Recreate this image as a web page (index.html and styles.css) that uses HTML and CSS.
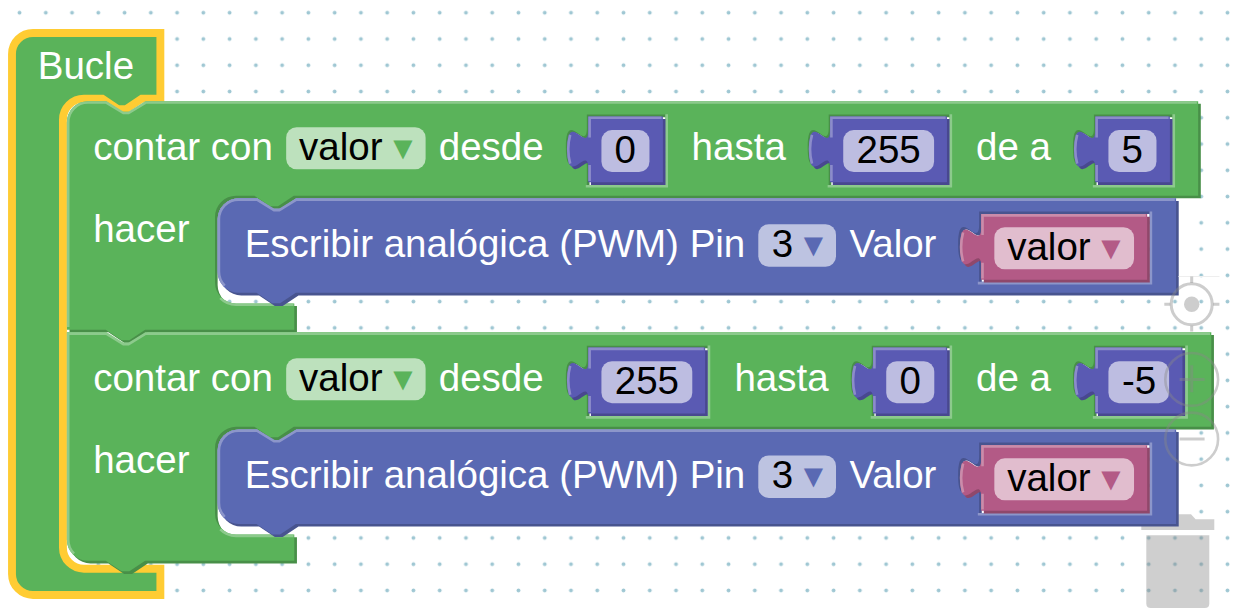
FILE: index.html
```html
<!DOCTYPE html>
<html lang="es">
<head>
<meta charset="utf-8">
<title>Bloques</title>
<link rel="stylesheet" href="styles.css">
</head>
<body>
<svg class="workspace" width="1237" height="614" viewBox="0 0 1237 614">
  <defs>
    <pattern id="grid" x="6.4" y="-0.4" width="26.26" height="26.26" patternUnits="userSpaceOnUse">
      <circle class="dot" cx="13.13" cy="13.13" r="1.9"/>
    </pattern>
  </defs>
  <rect width="1237" height="614" fill="url(#grid)"/>

  <g class="trash">
    <path d="M1141.3 530V519.3H1160L1164.6 514.3H1191L1195.6 519.3H1214.3V530Z"/>
    <path d="M1146.3 535.3H1209.3V603.5Q1209.3 608 1204.8 608H1150.8Q1146.3 608 1146.3 603.5Z"/>
  </g>

  <!-- Bucle -->
  <g class="green selected" transform="translate(12 33) scale(2.626)">
    <path class="body" d="M0 8A8 8 0 0 1 8 0H56.5V25H49.4l-6 4h-3l-6-4h-7a8 8 0 0 0-8 8V196a8 8 0 0 0 8 8H56.5V214H8a8 8 0 0 1-8-8z"/>
    <text class="label" x="9.8" y="17.4">Bucle</text>
  </g>

  <!-- contar 1 -->
  <g class="green" transform="translate(66.9 101.2) scale(2.626)">
    <path class="dark" transform="translate(1 1)" d="M0 8A8 8 0 0 1 8 0H15l6 4h3l6-4H430.8V36H86.4l-6 4h-3l-6-4h-7a8 8 0 0 0-8 8V69a8 8 0 0 0 8 8H86.6V87H29.8l-6 4h-3l-6-4H0z M198 5.1h29.9v26.8h-29.9v-6.8c0-10-8 8-8-7.5s8 2.5 8-7.5z M290.1 5.1h46v26.8h-46v-6.8c0-10-8 8-8-7.5s8 2.5 8-7.5z M391.1 5.1h29.9v26.8h-29.9v-6.8c0-10-8 8-8-7.5s8 2.5 8-7.5z"/>
    <path class="body" d="M0 8A8 8 0 0 1 8 0H15l6 4h3l6-4H430.8V36H86.4l-6 4h-3l-6-4h-7a8 8 0 0 0-8 8V69a8 8 0 0 0 8 8H86.6V87H29.8l-6 4h-3l-6-4H0z M198 5.1h29.9v26.8h-29.9v-6.8c0-10-8 8-8-7.5s8 2.5 8-7.5z M290.1 5.1h46v26.8h-46v-6.8c0-10-8 8-8-7.5s8 2.5 8-7.5z M391.1 5.1h29.9v26.8h-29.9v-6.8c0-10-8 8-8-7.5s8 2.5 8-7.5z"/>
    <path class="light" d="M.5 86V8A7.5 7.5 0 0 1 8 .5H15l6.5 4h2l6.5-4H430.3 M58.4 75a8.5 8.5 0 0 0 6 2.5H86.3 M228.4 5v27.4h-30.8 M336.6 5v27.4h-46.9 M421.5 5v27.4h-30.8"/>
    <text class="label" x="10" y="22.4">contar con</text>
    <rect class="field" x="83.5" y="9.9" width="53.1" height="16" rx="4"/>
    <text class="value" x="88.4" y="22.4">valor <tspan class="arrow">▾</tspan></text>
    <text class="label" x="141.6" y="22.4">desde</text>
    <text class="label" x="237.9" y="22.4">hasta</text>
    <text class="label" x="346.2" y="22.4">de a</text>
    <text class="label" x="10" y="53.5">hacer</text>
  </g>
  <g class="violet" transform="translate(588.3 116.4) scale(2.626)">
    <path class="dark" transform="translate(1 1)" d="M0 0H28.4V25.1H0V20c0-10-8 8-8-7.5s8 2.5 8-7.5z"/>
    <path class="body" d="M0 0H28.4V25.1H0V20c0-10-8 8-8-7.5s8 2.5 8-7.5z"/>
    <path class="light" d="M.5 24.6V18.5m-7.4-.5q-1.5-5.5 0-11m7.4 1V.5H27.9"/>
    <rect class="field" x="5" y="5.2" width="18.3" height="16" rx="4"/>
    <text class="value mid" x="14.1" y="17.6">0</text>
  </g>
  <g class="violet" transform="translate(830.1 116.4) scale(2.626)">
    <path class="dark" transform="translate(1 1)" d="M0 0H44.5V25.1H0V20c0-10-8 8-8-7.5s8 2.5 8-7.5z"/>
    <path class="body" d="M0 0H44.5V25.1H0V20c0-10-8 8-8-7.5s8 2.5 8-7.5z"/>
    <path class="light" d="M.5 24.6V18.5m-7.4-.5q-1.5-5.5 0-11m7.4 1V.5H44"/>
    <rect class="field" x="5" y="5.2" width="34.6" height="16" rx="4"/>
    <text class="value mid" x="22.3" y="17.6">255</text>
  </g>
  <g class="violet" transform="translate(1095.3 116.4) scale(2.626)">
    <path class="dark" transform="translate(1 1)" d="M0 0H28.4V25.1H0V20c0-10-8 8-8-7.5s8 2.5 8-7.5z"/>
    <path class="body" d="M0 0H28.4V25.1H0V20c0-10-8 8-8-7.5s8 2.5 8-7.5z"/>
    <path class="light" d="M.5 24.6V18.5m-7.4-.5q-1.5-5.5 0-11m7.4 1V.5H27.9"/>
    <rect class="field" x="5" y="5.2" width="18.3" height="16" rx="4"/>
    <text class="value mid" x="14.1" y="17.6">5</text>
  </g>

  <!-- escribir 1 -->
  <g id="write">
    <g class="blue" transform="translate(217.6 198.3) scale(2.626)">
      <path class="dark" transform="translate(1 1)" d="M0 8A8 8 0 0 1 8 0H15l6 4h3l6-4H365V36H29.8l-6 4h-3l-6-4H8a8 8 0 0 1-8-8z M290 5h64.9v26.8h-64.9v-6.8c0-10-8 8-8-7.5s8 2.5 8-7.5z"/>
      <path class="body" d="M0 8A8 8 0 0 1 8 0H15l6 4h3l6-4H365V36H29.8l-6 4h-3l-6-4H8a8 8 0 0 1-8-8z M290 5h64.9v26.8h-64.9v-6.8c0-10-8 8-8-7.5s8 2.5 8-7.5z"/>
      <path class="light" d="M2.7 33.3A7.5 7.5 0 0 1 .5 28V8A7.5 7.5 0 0 1 8 .5H15l6.5 4h2l6.5-4H364.5 M355.4 5v27.3h-65.9"/>
      <text class="label" x="10.3" y="22.4">Escribir analógica (PWM) Pin</text>
      <rect class="field" x="205.9" y="9.9" width="29.6" height="16.2" rx="4"/>
      <text class="value" x="211" y="22.4">3 <tspan class="arrow">▾</tspan></text>
      <text class="label" x="240.6" y="22.4">Valor</text>
    </g>
    <g class="pink" transform="translate(981.2 214.1) scale(2.626)">
      <path class="dark" transform="translate(1 1)" d="M0 0H63.2V25H0V20c0-10-8 8-8-7.5s8 2.5 8-7.5z"/>
      <path class="body" d="M0 0H63.2V25H0V20c0-10-8 8-8-7.5s8 2.5 8-7.5z"/>
      <path class="light" d="M.5 24.5V18.5m-7.4-.5q-1.5-5.5 0-11m7.4 1V.5H62.7"/>
      <rect class="field" x="5" y="5" width="53.2" height="16" rx="4"/>
      <text class="value" x="9.9" y="17.5">valor <tspan class="arrow">▾</tspan></text>
    </g>
  </g>

  <!-- contar 2 -->
  <g class="green" transform="translate(66.9 332.3) scale(2.626)">
    <path class="dark" transform="translate(1 1)" d="M0 0H15l6 4h3l6-4H435.8V36H86.4l-6 4h-3l-6-4h-7a8 8 0 0 0-8 8V69a8 8 0 0 0 8 8H86.6V87H29.8l-6 4h-3l-6-4H8a8 8 0 0 1-8-8z M198 5.1h46v26.8h-46v-6.8c0-10-8 8-8-7.5s8 2.5 8-7.5z M306.5 5.1h29.9v26.8h-29.9v-6.8c0-10-8 8-8-7.5s8 2.5 8-7.5z M391.1 5.1h34.8v26.8h-34.8v-6.8c0-10-8 8-8-7.5s8 2.5 8-7.5z"/>
    <path class="body" d="M0 0H15l6 4h3l6-4H435.8V36H86.4l-6 4h-3l-6-4h-7a8 8 0 0 0-8 8V69a8 8 0 0 0 8 8H86.6V87H29.8l-6 4h-3l-6-4H8a8 8 0 0 1-8-8z M198 5.1h46v26.8h-46v-6.8c0-10-8 8-8-7.5s8 2.5 8-7.5z M306.5 5.1h29.9v26.8h-29.9v-6.8c0-10-8 8-8-7.5s8 2.5 8-7.5z M391.1 5.1h34.8v26.8h-34.8v-6.8c0-10-8 8-8-7.5s8 2.5 8-7.5z"/>
    <path class="light" d="M2.7 84.3A7.5 7.5 0 0 1 .5 79V.5H15l6.5 4h2l6.5-4H435.3 M58.4 75a8.5 8.5 0 0 0 6 2.5H86.3 M244.5 5v27.4h-46.9 M336.6 5v27.4h-30.5 M426.4 5v27.4h-35.7"/>
    <text class="label" x="10" y="22.4">contar con</text>
    <rect class="field" x="83.5" y="9.9" width="53.1" height="16" rx="4"/>
    <text class="value" x="88.4" y="22.4">valor <tspan class="arrow">▾</tspan></text>
    <text class="label" x="141.6" y="22.4">desde</text>
    <text class="label" x="254.2" y="22.4">hasta</text>
    <text class="label" x="346.2" y="22.4">de a</text>
    <text class="label" x="10" y="53.5">hacer</text>
  </g>
  <g class="violet" transform="translate(588.3 347.5) scale(2.626)">
    <path class="dark" transform="translate(1 1)" d="M0 0H44.5V25.1H0V20c0-10-8 8-8-7.5s8 2.5 8-7.5z"/>
    <path class="body" d="M0 0H44.5V25.1H0V20c0-10-8 8-8-7.5s8 2.5 8-7.5z"/>
    <path class="light" d="M.5 24.6V18.5m-7.4-.5q-1.5-5.5 0-11m7.4 1V.5H44"/>
    <rect class="field" x="5" y="5.2" width="34.6" height="16" rx="4"/>
    <text class="value mid" x="22.3" y="17.6">255</text>
  </g>
  <g class="violet" transform="translate(873.1 347.5) scale(2.626)">
    <path class="dark" transform="translate(1 1)" d="M0 0H28.2V25.1H0V20c0-10-8 8-8-7.5s8 2.5 8-7.5z"/>
    <path class="body" d="M0 0H28.2V25.1H0V20c0-10-8 8-8-7.5s8 2.5 8-7.5z"/>
    <path class="light" d="M.5 24.6V18.5m-7.4-.5q-1.5-5.5 0-11m7.4 1V.5H27.7"/>
    <rect class="field" x="5" y="5.2" width="18.3" height="16" rx="4"/>
    <text class="value mid" x="14.1" y="17.6">0</text>
  </g>
  <g class="violet" transform="translate(1095.3 347.5) scale(2.626)">
    <path class="dark" transform="translate(1 1)" d="M0 0H33.2V25.1H0V20c0-10-8 8-8-7.5s8 2.5 8-7.5z"/>
    <path class="body" d="M0 0H33.2V25.1H0V20c0-10-8 8-8-7.5s8 2.5 8-7.5z"/>
    <path class="light" d="M.5 24.6V18.5m-7.4-.5q-1.5-5.5 0-11m7.4 1V.5H32.7"/>
    <rect class="field" x="5" y="5.2" width="23.1" height="16" rx="4"/>
    <text class="value mid" x="16.7" y="17.6">-5</text>
  </g>

  <!-- escribir 2 -->
  <use href="#write" y="231.1"/>

  <g class="controls">
    <path class="hairline" d="M1178.5 276.5H1219.5"/>
    <circle cx="1191.7" cy="304.3" r="20.5"/>
    <circle class="center" cx="1191.7" cy="304.3" r="7.7"/>
    <path d="M1191.7 276.5V282.9M1191.7 325.7V331.5M1164.3 304.3H1170.3M1213.1 304.3H1219.4"/>
    <circle class="ring" cx="1191.7" cy="379.4" r="26.4"/>
    <path d="M1179.6 379.4H1204.6M1191.7 365.3V392.3"/>
    <circle class="ring" cx="1191.7" cy="439" r="26.4"/>
    <path d="M1179.6 439H1204.6"/>
  </g>
</svg>
</body>
</html>
```
FILE: styles.css
```css
body {
  margin: 0;
  background: #fff;
  overflow: hidden;
}

.workspace {
  display: block;
  font-family: "Liberation Sans", Arial, sans-serif;
  font-size: 14.667px;
}

.dot { fill: #9fc7d3; }

.trash { fill: rgba(136, 136, 136, 0.4); }

.green { --body: #5ab35a; --dark: #488f48; --light: #8cca8c; }
.blue { --body: #5a69b3; --dark: #48548f; --light: #8c96ca; }
.violet { --body: #5a5ab3; --dark: #48488f; --light: #8c8cca; }
.pink { --body: #b35a86; --dark: #8f486b; --light: #ca8caa; }

.body { fill: var(--body); fill-rule: evenodd; }
.dark { fill: var(--dark); fill-rule: evenodd; }
.light { fill: none; stroke: var(--light); stroke-width: 1; }

.selected .body { stroke: #fc3; stroke-width: 3; }

.field { fill: #fff; fill-opacity: 0.6; }
.label { fill: #fff; }
.value { fill: #000; white-space: pre; }
.mid { text-anchor: middle; }
.arrow { fill: var(--body); font-family: "Liberation Sans", "DejaVu Sans", sans-serif; }

.controls { fill: none; stroke: rgba(136, 136, 136, 0.42); stroke-width: 3; }
.controls .ring { stroke-width: 2.6; }
.controls .center { fill: rgba(136, 136, 136, 0.42); stroke: none; }
.controls .hairline { stroke: #eee; stroke-width: 1; }
```
